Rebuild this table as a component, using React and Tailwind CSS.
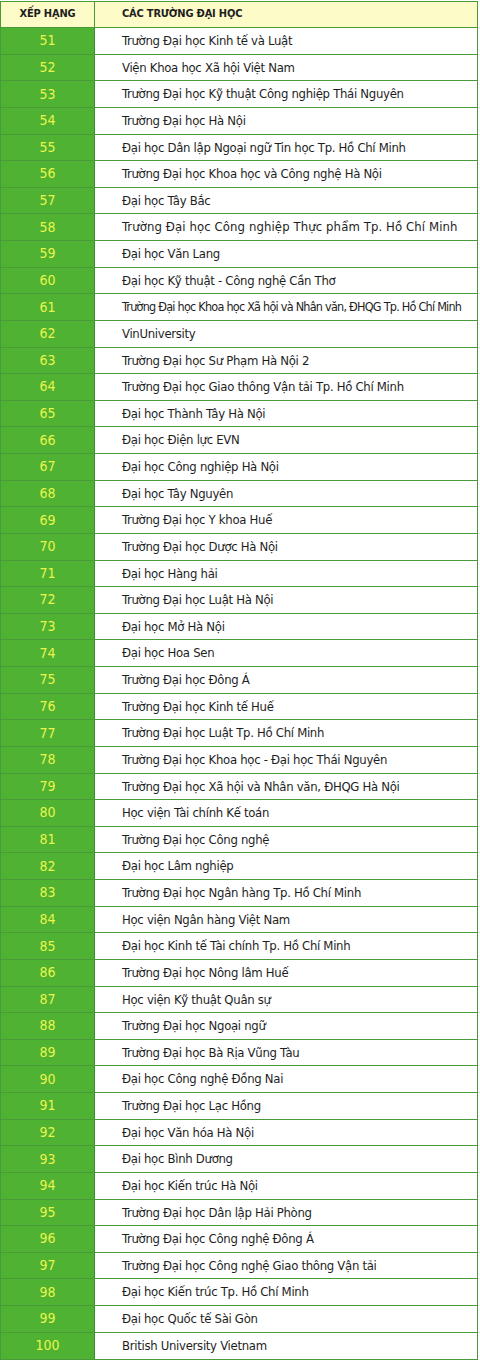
const schools = [
  "Trường Đại học Kinh tế và Luật",
  "Viện Khoa học Xã hội Việt Nam",
  "Trường Đại học Kỹ thuật Công nghiệp Thái Nguyên",
  "Trường Đại học Hà Nội",
  "Đại học Dân lập Ngoại ngữ Tin học Tp. Hồ Chí Minh",
  "Trường Đại học Khoa học và Công nghệ Hà Nội",
  "Đại học Tây Bắc",
  "Trường Đại học Công nghiệp Thực phẩm Tp. Hồ Chí Minh",
  "Đại học Văn Lang",
  "Đại học Kỹ thuật - Công nghệ Cần Thơ",
  "Trường Đại học Khoa học Xã hội và Nhân văn, ĐHQG Tp. Hồ Chí Minh",
  "VinUniversity",
  "Trường Đại học Sư Phạm Hà Nội 2",
  "Trường Đại học Giao thông Vận tải Tp. Hồ Chí Minh",
  "Đại học Thành Tây Hà Nội",
  "Đại học Điện lực EVN",
  "Đại học Công nghiệp Hà Nội",
  "Đại học Tây Nguyên",
  "Trường Đại học Y khoa Huế",
  "Trường Đại học Dược Hà Nội",
  "Đại học Hàng hải",
  "Trường Đại học Luật Hà Nội",
  "Đại học Mở Hà Nội",
  "Đại học Hoa Sen",
  "Trường Đại học Đông Á",
  "Trường Đại học Kinh tế Huế",
  "Trường Đại học Luật Tp. Hồ Chí Minh",
  "Trường Đại học Khoa học - Đại học Thái Nguyên",
  "Trường Đại học Xã hội và Nhân văn, ĐHQG Hà Nội",
  "Học viện Tài chính Kế toán",
  "Trường Đại học Công nghệ",
  "Đại học Lâm nghiệp",
  "Trường Đại học Ngân hàng Tp. Hồ Chí Minh",
  "Học viện Ngân hàng Việt Nam",
  "Đại học Kinh tế Tài chính Tp. Hồ Chí Minh",
  "Trường Đại học Nông lâm Huế",
  "Học viện Kỹ thuật Quân sự",
  "Trường Đại học Ngoại ngữ",
  "Trường Đại học Bà Rịa Vũng Tàu",
  "Đại học Công nghệ Đồng Nai",
  "Trường Đại học Lạc Hồng",
  "Đại học Văn hóa Hà Nội",
  "Đại học Bình Dương",
  "Đại học Kiến trúc Hà Nội",
  "Trường Đại học Dân lập Hải Phòng",
  "Trường Đại học Công nghệ Đông Á",
  "Trường Đại học Công nghệ Giao thông Vận tải",
  "Đại học Kiến trúc Tp. Hồ Chí Minh",
  "Đại học Quốc tế Sài Gòn",
  "British University Vietnam",
];

// the long rows are set tighter/looser in the original
const tight = {
  7: "tracking-[0.1px]",
  10: "text-[12.5px] tracking-[-0.75px]",
};

export default function App() {
  return (
    <div className="w-[480px] h-[1362px] bg-white pt-px pr-[2px] font-['DejaVu_Sans_Condensed','Liberation_Sans_Narrow','Liberation_Sans',sans-serif]">
      <div className="border border-[#4a9a3a]">
        {/* header */}
        <div className="flex h-[26px] bg-[#fdfcc9] border-b border-[#4a9a3a] text-[11px] font-bold text-[#1e1e1e] tracking-[-0.2px]">
          <div className="w-[94px] shrink-0 flex items-center justify-center border-r border-[#4a9a3a]">
            XẾP HẠNG
          </div>
          <div className="flex-1 flex items-center pl-[27px]">CÁC TRƯỜNG ĐẠI HỌC</div>
        </div>

        {schools.map((name, i) => (
          <div
            key={i}
            className="flex h-[26.64px] border-b border-[#4a9a3a] last:border-b-0 text-[13px]"
          >
            <div className="w-[94px] shrink-0 flex items-center justify-center bg-[#4fb233] border-r border-[#3f8a2e] text-[#e9f54a] text-[14px]">
              {51 + i}
            </div>
            <div
              className={`flex-1 flex items-center pl-[27px] text-[#1e1e1e] whitespace-nowrap ${
                tight[i] || "tracking-[-0.3px]"
              }`}
            >
              {name}
            </div>
          </div>
        ))}
      </div>
    </div>
  );
}
